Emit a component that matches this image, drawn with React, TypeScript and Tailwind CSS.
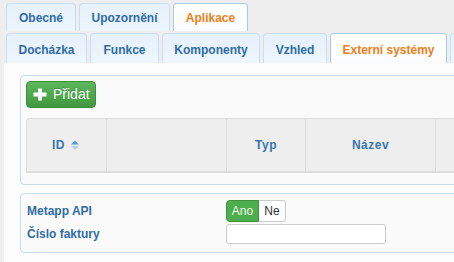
const topTabs = [
  { label: 'Obecné', w: 'w-[70px]' },
  { label: 'Upozornění', w: 'w-[91px]' },
  { label: 'Aplikace', w: 'w-[75px]', active: true },
];

const subTabs = [
  { label: 'Docházka', w: 'w-[81px]' },
  { label: 'Funkce', w: 'w-[69px]' },
  { label: 'Komponenty', w: 'w-[98px]' },
  { label: 'Vzhled', w: 'w-[64px]' },
  { label: 'Externí systémy', w: 'w-[117px]', active: true },
  { label: '', w: 'w-[70px]' },
];

type TabProps = { label: string; w: string; active?: boolean; tall?: boolean };

const Tab = ({ label, w, active, tall }: TabProps) => (
  <div
    className={`${w} ${tall ? 'h-[30px] pt-[2px]' : 'h-[28px]'} shrink-0 flex items-center justify-center rounded-t-[4px] border border-b-0 text-[12px] font-bold ${
      active
        ? 'border-[#a9cbe6] bg-gradient-to-b from-[#ffffff] to-[#fbfcfd] text-[#ee7f1b]'
        : 'border-[#c9def0] bg-gradient-to-b from-[#e6f1fc] to-[#eef6fd] text-[#2f6ca6]'
    }`}
  >
    {label}
  </div>
);

const SortIcon = () => (
  <svg width="8" height="11" viewBox="0 0 8 11" className="ml-[6px]">
    <path d="M0 4.5 L4 0.5 L8 4.5 Z" fill="#5a9ad6" />
    <path d="M0 6 L4 10 L8 6 Z" fill="#b4d0ec" />
  </svg>
);

const App = () => {
  return (
    <div
      className="w-[454px] h-[262px] overflow-hidden bg-[#eeeeee] flex flex-col"
      style={{ fontFamily: '"Liberation Sans", Arial, sans-serif' }}
    >
      <div className="flex gap-[3px] pl-[6px] pt-[3px] h-[31px]">
        {topTabs.map((t) => (
          <Tab key={t.label} {...t} />
        ))}
      </div>

      <div className="ml-[4px] flex-1 flex flex-col">
        <div className="flex gap-[3px] pl-[2px] pt-[2px] h-[32px] items-end">
          {subTabs.map((t) => (
            <Tab key={t.label || 'more'} {...t} tall />
          ))}
        </div>

        <div className="flex-1 bg-[#fcfcfc] pl-[16px] pt-[12px]">
          <section className="w-[460px] h-[110px] rounded-[4px] border border-[#c8dcec] bg-[#fafafa] px-[5px] pt-[5px]">
            <button className="flex h-[27px] w-[70px] items-center rounded-[4px] border border-[#3b8e3b] bg-gradient-to-b from-[#5cb85c] to-[#41973f] pl-[6px] text-[14px] text-white [text-shadow:0_-1px_0_rgba(0,0,0,0.2)]">
              <svg width="14" height="13" viewBox="0 0 14 13" className="mr-[6px]">
                <path d="M5 0.5 H9 V4.5 H13.5 V8.5 H9 V12.5 H5 V8.5 H0.5 V4.5 H5 Z" fill="#ffffff" />
              </svg>
              Přidat
            </button>

            <div className="mt-[10px] flex h-[55px] rounded-tl-[4px] border border-b-2 border-[#dddddd] bg-[#eeeeee] text-[12px] font-bold tracking-[0.5px] text-[#3a76b0]">
              <div className="flex w-[80px] items-center justify-center border-r border-[#dddddd] pr-[2px]">
                ID
                <SortIcon />
              </div>
              <div className="w-[120px] border-r border-[#dddddd]" />
              <div className="flex w-[79px] items-center justify-center border-r border-[#dddddd]">Typ</div>
              <div className="flex w-[130px] items-center justify-center border-r border-[#dddddd]">Název</div>
              <div className="flex-1" />
            </div>
          </section>

          <section className="mt-[8px] w-[460px] h-[60px] rounded-[4px] border border-[#c8dcec] bg-[#fafafa] pl-[6px] pt-[5px] text-[12px]">
            <div className="flex h-[23px] items-center">
              <span className="w-[199px] font-bold text-[#2f6ca6]">Metapp API</span>
              <div className="flex h-[22px]">
                <span className="flex w-[33px] items-center justify-center rounded-l-[4px] border border-[#3e8f3e] bg-[#4cae4c] text-[#f4fbf0]">
                  Ano
                </span>
                <span className="flex w-[27px] items-center justify-center rounded-r-[4px] border border-l-0 border-[#cccccc] bg-white text-[#333333]">
                  Ne
                </span>
              </div>
            </div>
            <div className="mt-[1px] flex h-[21px] items-center">
              <span className="w-[199px] font-bold text-[#2f6ca6]">Číslo faktury</span>
              <input className="h-[20px] w-[160px] rounded-[3px] border border-[#cccccc] bg-white" />
            </div>
          </section>
        </div>
      </div>
    </div>
  );
};

export default App;
